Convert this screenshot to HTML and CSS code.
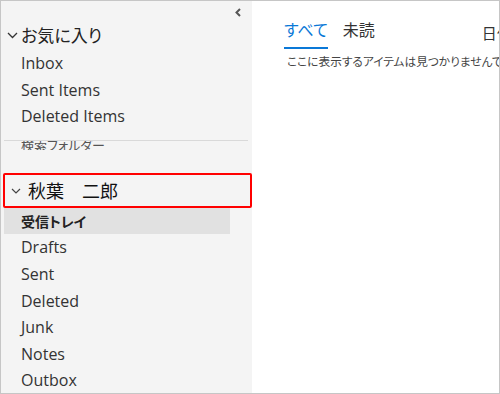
FILE: index.html
```html
<!DOCTYPE html>
<html lang="ja">
<head>
  <meta charset="UTF-8">
  <title>Mail</title>
  <link rel="stylesheet" href="styles.css">
</head>
<body>

  <div class="frame">
    <!-- Folder pane -->
    <div class="sidebar">
      <div class="pane-top">
        <svg class="collapse" width="6" height="9" viewBox="0 0 6 9"><path d="M5 1 L1.5 4.5 L5 8" fill="none" stroke="#555" stroke-width="2"/></svg>
      </div>

      <div class="group-head fav">
        <svg class="chev" width="11" height="7" viewBox="0 0 11 7"><path d="M1 1 L5.5 5.5 L10 1" fill="none" stroke="#333" stroke-width="1.3"/></svg>
        <span>お気に入り</span>
      </div>
      <div class="folder">Inbox</div>
      <div class="folder">Sent Items</div>
      <div class="folder">Deleted Items</div>

      <div class="divider"></div>
      <div class="clipped">
        <div class="folder search">検索フォルダー</div>
      </div>

      <!-- Account -->
      <div class="group-head account">
        <svg class="chev" width="10" height="6" viewBox="0 0 10 6"><path d="M1 1 L5 5 L9 1" fill="none" stroke="#444" stroke-width="1.2"/></svg>
        <span>秋葉　二郎</span>
      </div>
      <div class="list">
        <div class="folder selected">受信トレイ</div>
        <div class="folder">Drafts</div>
        <div class="folder">Sent</div>
        <div class="folder">Deleted</div>
        <div class="folder">Junk</div>
        <div class="folder">Notes</div>
        <div class="folder">Outbox</div>
      </div>
    </div>

    <!-- Message list -->
    <div class="main">
      <div class="tabs">
        <div class="tab active">すべて</div>
        <div class="tab">未読</div>
        <div class="sort">日付</div>
      </div>
      <p class="empty">ここに表示するアイテムは見つかりませんでした。</p>
    </div>
  </div>

</body>
</html>
```

FILE: styles.css
```css
body {
  margin: 0;
  font-family: "Open Sans", "Noto Sans CJK JP", sans-serif;
  background: #fff;
}

.frame {
  width: 500px;
  height: 394px;
  box-sizing: border-box;
  border: 1px solid #c6c6c6;
  display: flex;
  overflow: hidden;
}

.sidebar {
  width: 251px;
  flex-shrink: 0;
  background: #f4f4f4;
  overflow: hidden;
}

.pane-top {
  height: 21px;
  display: flex;
  justify-content: flex-end;
  align-items: center;
  padding-right: 11px;
}

.collapse {
  margin-top: 1px;
}

.group-head {
  display: flex;
  align-items: center;
  color: #222;
  font-family: "Noto Sans CJK JP", sans-serif;
  font-feature-settings: "palt";
}

.group-head.fav {
  box-sizing: border-box;
  height: 28px;
  padding: 0 0 3px 6px;
  font-size: 17px;
}

.group-head.fav .chev {
  margin-right: 3px;
  margin-top: 2px;
}

.group-head.account {
  box-sizing: border-box;
  margin: 23px 0 0 2px;
  width: 249px;
  height: 35px;
  border: 2px solid #ff0000;
  border-radius: 2px;
  padding-left: 6px;
  font-size: 18px;
  color: #111;
}

.group-head.account .chev {
  margin-right: 7px;
  margin-top: 2px;
}

.folder {
  height: 26.6px;
  line-height: 26.6px;
  padding-left: 20px;
  font-size: 16px;
  color: #333;
  white-space: nowrap;
}

.folder.selected {
  margin: 0 22px 0 3px;
  padding-left: 17px;
  background: #e1e1e1;
  font-family: "Noto Sans CJK JP", sans-serif;
  font-weight: bold;
  font-size: 14px;
  color: #222;
  font-feature-settings: "palt";
}

.divider {
  height: 1px;
  margin: 10px 4px 0 3px;
  background: #d9d9d9;
}

.clipped {
  height: 9px;
  overflow: hidden;
}

.folder.search {
  margin-top: -9px;
  font-family: "Noto Sans CJK JP", sans-serif;
  font-size: 13px;
  color: #555;
  font-feature-settings: "palt";
}

.main {
  flex: 1;
  background: #fff;
  padding-left: 32px;
  font-family: "Noto Sans CJK JP", sans-serif;
  font-feature-settings: "palt";
  white-space: nowrap;
  overflow: hidden;
}

.tabs {
  display: flex;
  align-items: flex-end;
  height: 48px;
}

.tab {
  font-size: 16px;
  color: #333;
  padding-bottom: 6px;
  margin-right: 15px;
  border-bottom: 2px solid transparent;
}

.tab.active {
  color: #0a78d7;
  border-bottom-color: #0a78d7;
}

.sort {
  margin-left: 92px;
  font-size: 15px;
  color: #333;
  padding-bottom: 6px;
}

.empty {
  margin: 3px 0 0 3px;
  font-size: 11.7px;
  color: #444;
}
```
